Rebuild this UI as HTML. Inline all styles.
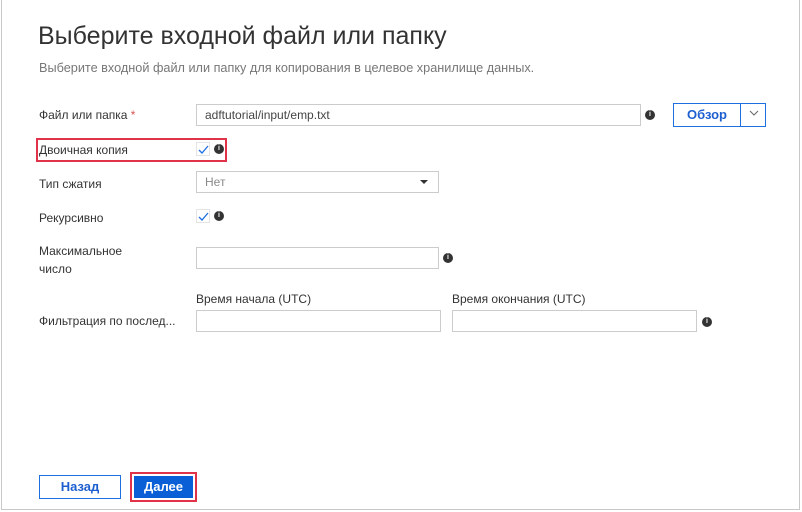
<!DOCTYPE html>
<html><head><meta charset="utf-8"><style>
*{box-sizing:border-box;margin:0;padding:0}
body{width:802px;height:512px;background:#fff;font-family:"Liberation Sans",sans-serif;color:#333;position:relative;overflow:hidden}
.frame{position:absolute;left:1px;top:0;width:799px;height:510px;border:1px solid #c8c8c8;border-top:none}
.a{position:absolute;white-space:nowrap}
.lbl{font-size:12px;color:#333}
.inp{position:absolute;border:1px solid #ccc;background:#fff;font-size:12px;padding:3px 8px;color:#444}
.info{position:absolute;width:10px;height:10px;border-radius:50%;background:#333;color:#fff;font-size:7px;font-weight:bold;text-align:center;line-height:10px}
.cb{position:absolute;width:14px;height:14px;border:1px solid #e4e4e4}
</style></head><body>
<div class="frame"></div>
<div class="a" style="left:38px;top:22px;font-size:25px;color:#333">Выберите входной файл или папку</div>
<div class="a" style="left:39px;top:61px;font-size:12.7px;color:#777">Выберите входной файл или папку для копирования в целевое хранилище данных.</div>

<div class="a lbl" style="left:39px;top:108px">Файл или папка <span style="color:#d9534f">*</span></div>
<div class="inp" style="left:196px;top:104px;width:445px;height:22px">adftutorial/input/emp.txt</div>
<div class="info" style="left:645px;top:110px">i</div>
<div class="a" style="left:673px;top:103px;width:93px;height:24px;border:1px solid #1e6fe0"></div>
<div class="a" style="left:674px;top:104px;width:67px;height:22px;color:#1e5fd0;font-size:13px;font-weight:bold;text-align:center;line-height:22px;border-right:1px solid #1e6fe0">Обзор</div>
<svg class="a" style="left:749px;top:109px" width="10" height="8"><path d="M1 2 L5 6 L9 2" stroke="#666" fill="none"/></svg>

<div class="a" style="left:36px;top:138px;width:191px;height:24px;border:2px solid #e0334a"></div>
<div class="a lbl" style="left:39px;top:143px">Двоичная копия</div>
<svg class="cb" style="left:196px;top:142px"><path d="M2 7 L5 10 L11 3" stroke="#1e6fe0" stroke-width="1.3" fill="none"/></svg>
<div class="info" style="left:214px;top:144px">i</div>

<div class="a lbl" style="left:39px;top:177px">Тип сжатия</div>
<div class="inp" style="left:196px;top:171px;width:243px;height:22px;color:#888">Нет</div>
<svg class="a" style="left:419px;top:179px" width="10" height="6"><path d="M1 1 L5 5 L9 1Z" fill="#333"/></svg>

<div class="a lbl" style="left:39px;top:211px">Рекурсивно</div>
<svg class="cb" style="left:196px;top:209px"><path d="M2 7 L5 10 L11 3" stroke="#1e6fe0" stroke-width="1.3" fill="none"/></svg>
<div class="info" style="left:214px;top:211px">i</div>

<div class="a lbl" style="left:39px;top:244px">Максимальное</div>
<div class="a lbl" style="left:39px;top:262px">число</div>
<div class="inp" style="left:196px;top:247px;width:243px;height:22px"></div>
<div class="info" style="left:443px;top:253px">i</div>

<div class="a lbl" style="left:196px;top:292px">Время начала (UTC)</div>
<div class="a lbl" style="left:452px;top:292px">Время окончания (UTC)</div>
<div class="a lbl" style="left:39px;top:314px">Фильтрация по послед...</div>
<div class="inp" style="left:196px;top:310px;width:245px;height:22px"></div>
<div class="inp" style="left:452px;top:310px;width:245px;height:22px"></div>
<div class="info" style="left:702px;top:317px">i</div>

<div class="a" style="left:39px;top:475px;width:82px;height:24px;border:1px solid #1e6fe0;color:#1e5fd0;font-size:13px;font-weight:bold;text-align:center;line-height:22px">Назад</div>
<div class="a" style="left:130px;top:472px;width:67px;height:30px;border:2px solid #e0334a;padding:2px"><div style="background:#0a5fd6;color:#fff;font-size:13px;font-weight:bold;text-align:center;height:22px;line-height:22px">Далее</div></div>
</body></html>
